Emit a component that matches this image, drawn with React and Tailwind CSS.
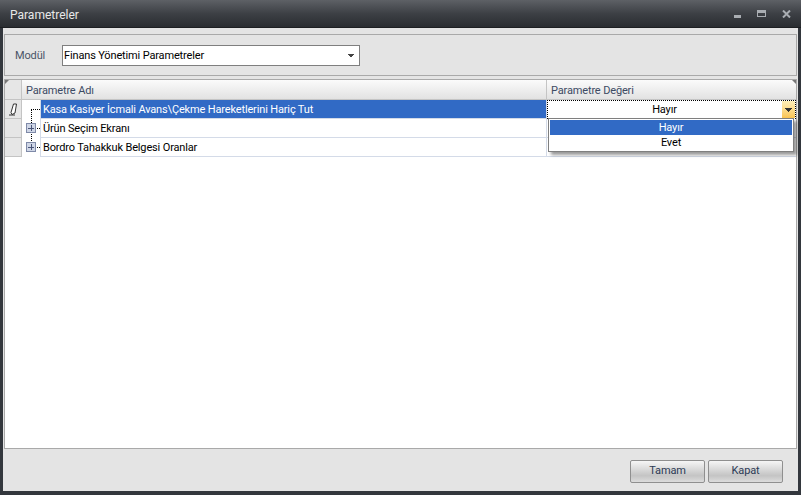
import React from "react";

function TreeLines() {
  return (
    <svg width="19" height="57" className="absolute left-0 top-0" shapeRendering="crispEdges">
      <path d="M9 10V47M9 9H19M15 28H19M15 47H19" fill="none" stroke="#000" strokeDasharray="1 1" />
      <rect x="4.5" y="23.5" width="9" height="9" rx="1" fill="#cfd6e6" stroke="#7f8aa8" />
      <path d="M6 28H12M9 25V31" stroke="#4a5578" />
      <rect x="4.5" y="42.5" width="9" height="9" rx="1" fill="#cfd6e6" stroke="#7f8aa8" />
      <path d="M6 47H12M9 44V50" stroke="#4a5578" />
    </svg>
  );
}

function PencilIcon() {
  return (
    <svg width="10" height="13" viewBox="0 0 10 13" fill="none">
      <path d="M5.5 1H8.5L7 10L4 11.5L3 9.5Z" fill="#fff" stroke="#333" strokeWidth="1" />
      <path d="M1 12H7" stroke="#333" strokeWidth="1" />
    </svg>
  );
}

function Arrow() {
  return (
    <svg width="7" height="4" viewBox="0 0 7 4" shapeRendering="crispEdges">
      <path d="M0 0H7V1H0ZM1 1H6V2H5V3H4V4H3V3H2V2H1Z" fill="#333" />
    </svg>
  );
}

function ComboArrow() {
  return (
    <svg width="6" height="3" viewBox="0 0 6 3" shapeRendering="crispEdges">
      <path d="M0 0H6V1H5V2H4V3H2V2H1V1H0Z" fill="#444" />
    </svg>
  );
}

function CornerFold({ className }) {
  return (
    <svg width="4" height="4" viewBox="0 0 4 4" className={className}>
      <path d="M0 0H4L0 4Z" fill="#777" />
    </svg>
  );
}

function GridRow({ name, selected }) {
  return (
    <div className="flex h-[19px]">
      <div className="w-[17px] shrink-0 border-r border-b border-[#c4c4c4] bg-[#e6e6e6] flex items-center justify-center">
        {selected && <PencilIcon />}
      </div>
      <div className="w-[18px] shrink-0 bg-white" />
      <div
        className={`w-[506px] shrink-0 border-l border-b border-[#d4dbe8] pl-[2px] leading-[20px] ${
          selected ? "bg-[#316ac5] text-white" : "bg-white text-black"
        }`}
      >
        {name}
      </div>
      <div className="flex-1 border-l border-b border-[#d4dbe8] bg-white" />
    </div>
  );
}

function DialogButton({ children }) {
  return (
    <button className="w-[75px] h-[23px] pt-[1px] rounded-[2px] border border-[#8f8f8f] bg-gradient-to-b from-[#f6f6f6] via-[#c4c4c4] via-70% to-[#dcdcdc] text-[#2b3a55] text-[11px]">
      {children}
    </button>
  );
}

export default function App() {
  return (
    <div className="w-[801px] h-[495px] flex flex-col bg-[#33373d] text-[11px] tracking-[-0.15px] font-['Roboto',sans-serif]">
      {/* title bar */}
      <div className="h-[28px] shrink-0 flex items-center justify-between pl-[10px] pr-[10px] bg-gradient-to-b from-[#5e6166] via-[#3d4045] to-[#2a2d31] border-b border-[#1d1f22]">
        <span className="text-[#e8e8e8] text-[12px] tracking-normal pt-[2px]">Parametreler</span>
        <div className="flex items-center gap-[16px]">
          <div className="w-[7px] h-[3px] bg-[#a9adb2] mt-[6px]" />
          <div className="w-[9px] h-[7px] border border-[#a9adb2] border-t-[3px]" />
          <svg width="9" height="8" viewBox="0 0 9 8">
            <path d="M1 0.5L8 7.5M8 0.5L1 7.5" stroke="#a9adb2" strokeWidth="2" />
          </svg>
        </div>
      </div>

      {/* body */}
      <div className="flex-1 mx-[3px] mb-[4px] flex flex-col bg-[#e4e4e4] min-h-0">
        <div className="pt-[6px] px-[1px]">
          <div className="h-[42px] border border-[#a9a9a9] flex items-center pl-[10px]">
            <span className="w-[47px] pt-[2px] text-[#4a5568]">Modül</span>
            <div className="w-[298px] h-[21px] border border-[#7f7f7f] bg-white flex items-center justify-between pl-[1px] pr-[5px] text-black">
              <span className="pt-[2px]">Finans Yönetimi Parametreler</span>
              <ComboArrow />
            </div>
          </div>
        </div>

        <div className="mt-[3px] mx-[1px] flex-1 border border-[#a9a9a9] bg-white flex flex-col relative min-h-0">
          <div className="flex h-[20px] border-b border-[#c4c4c4] bg-gradient-to-b from-[#fbfbfb] to-[#e2e2e2] text-[#3c4a63]">
            <div className="w-[17px] border-r border-[#c4c4c4] bg-[#e6e6e6]" />
            <div className="w-[525px] border-r border-[#c4c4c4] pl-[4px] leading-[21px]">Parametre Adı</div>
            <div className="flex-1 pl-[4px] leading-[21px]">Parametre Değeri</div>
          </div>
          <CornerFold className="absolute left-0 top-0" />
          <CornerFold className="absolute right-0 top-0 -scale-x-100" />

          <div className="relative">
            <GridRow name="Kasa Kasiyer İcmali Avans\Çekme Hareketlerini Hariç Tut" selected />
            <GridRow name="Ürün Seçim Ekranı" />
            <GridRow name="Bordro Tahakkuk Belgesi Oranlar" />
            <div className="absolute left-[17px] top-0 w-[19px] h-[57px]">
              <TreeLines />
            </div>
          </div>

          {/* open editor + dropdown */}
          <div className="absolute left-[542px] top-[20px] right-0 h-[19px] border border-dotted border-black bg-white text-black flex items-center justify-center pr-[14px] pt-[1px]">
            Hayır
            <div className="absolute right-0 top-0 bottom-0 w-[13px] bg-gradient-to-b from-[#fdeeb8] to-[#fac552] flex items-center justify-center">
              <Arrow />
            </div>
          </div>
          <div className="absolute left-[543px] top-[38px] w-[246px] border border-[#7f7f7f] bg-white shadow-[3px_3px_3px_rgba(0,0,0,0.4)] p-[1px] text-center text-black">
            <div className="h-[15px] bg-[#316ac5] text-white leading-[15px]">Hayır</div>
            <div className="h-[15px] leading-[16px]">Evet</div>
          </div>
        </div>

        <div className="h-[42px] shrink-0 flex items-center justify-end gap-[3px] pr-[15px] pt-[2px]">
          <DialogButton>Tamam</DialogButton>
          <DialogButton>Kapat</DialogButton>
        </div>
      </div>
    </div>
  );
}
